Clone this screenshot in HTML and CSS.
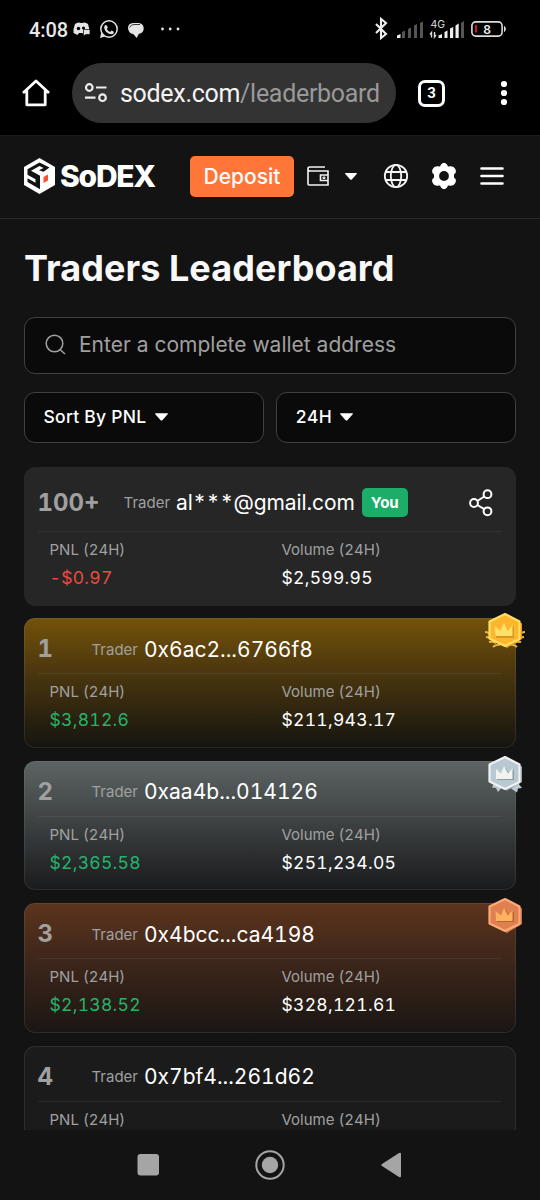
FILE: index.html
```html
<!DOCTYPE html>
<html lang="en">
<head>
<meta charset="utf-8">
<title>Traders Leaderboard</title>
<link rel="stylesheet" href="styles.css">
</head>
<body>
<div class="phone">
  <div class="status">
    <span class="clock">4:08</span>
    <svg class="status-apps" width="110" height="22" viewBox="0 0 110 22" fill="#e4e4e4">
      <path d="M3 5Q6 2.500 9 4h1q3-1.500 6 1l1 4q1 2 0 3h-5v3l-2-1H7l-1.500 2-4-2Q1 10 3 5z"/>
      <circle cx="6.500" cy="9.500" r="1.700" fill="#000"/><circle cx="11.500" cy="9" r="1.500" fill="#000"/>
      <path d="M11.500 10.500H18v5h-4l-2.500 1.500z" stroke="#000" stroke-width=".7"/>
      <circle cx="37" cy="10" r="8.200" fill="none" stroke="#e4e4e4" stroke-width="1.500"/>
      <path d="M29.300 13.500 28 19l5-1.500z"/>
      <path d="M32.800 6.500q1-1.200 2 0l1 2-1 1.500q1.500 2.300 3.300 3l1.500-1.500 2.200 1.200q.5 2-2 2.600Q33.300 15 32.100 8.500z"/>
      <path d="M56 9Q56 4.500 61 4h6q5 1 4.700 6-.3 4-5 5l-2 4-3.500-4Q56.500 14.500 56 9z"/>
      <path d="M57.500 8.500Q59 5.500 62 5.500h6" fill="none" stroke="#222" stroke-width=".9"/>
      <circle cx="90.500" cy="10" r="1.400"/><circle cx="98.200" cy="10" r="1.400"/><circle cx="106" cy="10" r="1.400"/>
    </svg>
    <svg class="status-signals" width="136" height="26" viewBox="0 0 136 26">
      <path d="m3 8 10 10-5 4V3l5 4L3 17" fill="none" stroke="#eee" stroke-width="2.100"/>
      <g fill="#555"><path d="M29 16l3-1.500V22h-3zM35 13l3-1.500V22h-3zM41 9.500 44 8v14h-3zM47 7l3-1.500V22h-3z"/></g>
      <path d="M24 22v-2.500l3.500-1.500v4z" fill="#eee"/>
      <text class="net" x="57.500" y="12">4G</text>
      <path d="M58.500 21.500V16.500l-1.500 2M61.500 16v5l1.500-2" stroke="#ddd" fill="none" stroke-width="1.400"/>
      <path d="M65.500 19.500 69 18v4h-3.500zM71.500 16l3-1.500V22h-3zM77 12.500 80.200 11v11H77zM82.500 9.500l3.200-2V22h-3.200z" fill="#eee"/>
      <path d="M88 7l3-2v17h-3z" fill="#555"/>
      <rect x="98.900" y="5.900" width="30.200" height="14.200" rx="3.800" fill="none" stroke="#ddd" stroke-width="1.600"/>
      <path d="M131.500 10.500q1.800 2.200 0 5z" stroke="#ddd" fill="#ddd"/>
      <rect x="102" y="9" width="2" height="7.500" fill="#d51515"/>
      <text class="batt" x="114" y="17.700" text-anchor="middle">8</text>
    </svg>
  </div>
  <div class="browser">
    <svg class="home" width="28" height="30" viewBox="0 0 28 30" fill="none" stroke="#fff" stroke-width="2.800" stroke-linejoin="round"><path d="M1 15 14 3l13 12M4.800 12.500v14.300h18.400V12.500"/></svg>
    <div class="url">
      <svg width="24" height="20" viewBox="0 0 24 20" fill="none" stroke="#eee" stroke-width="2.200"><circle cx="5.300" cy="4.500" r="3.300"/><path d="M12 4.500h10.500M1 14.700h10.500"/><circle cx="18.500" cy="14.700" r="3.300"/></svg>
      <span class="address">sodex.com<i>/leaderboard</i></span>
    </div>
    <div class="tabs">3</div>
    <svg class="dots" width="8" height="26" viewBox="0 0 8 26" fill="#fff"><circle cx="4" cy="4" r="3.100"/><circle cx="4" cy="13" r="3.100"/><circle cx="4" cy="22" r="3.100"/></svg>
  </div>
  <header class="site">
    <svg class="mark" width="32" height="36" viewBox="0 0 32 36">
      <path d="M16.500 0 32 9v18l-15.500 9L1 27V9z" fill="#fff"/>
      <path d="M26.500 9.500 16.500 4.500 4.500 11.200v5.600l8 4.400v3.500l-8-4.400v3.600l12.500 7.300V17.800l-3-1.700-6-3.400 8.500-4.700 4 2-4.500 2.200 4.500 1.500z" fill="#131313"/>
      <path d="m20.500 19 4.500-2.500v6L20.500 25z" fill="#f4542c"/>
    </svg>
    <span class="brand">SoDEX</span>
    <button class="deposit">Deposit</button>
    <svg class="wallet" width="22" height="20" viewBox="0 0 22 20" fill="none" stroke="#f4f4f4" stroke-width="1.600"><path d="M18 1H3Q1 1 1 2.500V18Q1 19 2 19h19V5H3Q1 5 1 3M21 9h-7.500v5.500H21"/><path d="M16 11h2v1.500h-2z" stroke-width="1"/></svg>
    <svg class="caret" width="12" height="7" viewBox="0 0 12 7" fill="#fff"><path d="M.5 0h11q.8.300.2 1L7 6.300Q6 7.300 5 6.300L.3 1Q-.3.300.5 0z"/></svg>
    <svg class="globe" width="26" height="26" viewBox="0 0 26 26" fill="none" stroke="#f4f4f4" stroke-width="1.800"><circle cx="13" cy="13" r="11.200"/><ellipse cx="13" cy="13" rx="5.200" ry="11.200"/><path d="M2.500 9h21M2.500 17h21"/></svg>
    <svg class="gear" width="26" height="28" viewBox="0 0 26 28"><path d="M10 2.500Q13-.8 16 2.500l1 2 2.500-.2Q23 4 24.300 7l.7 2.300q0 1.700-2 3.200v3q2 1.500 2 3.200L24.300 21q-1.300 3-4.800 2.700l-2.500-.2-1 2q-3 3.300-6 0l-1-2-2.500.2Q3 24 1.700 21L1 18.700q0-1.700 2-3.200v-3Q1 11 1 9.300L1.700 7Q3 4 6.500 4.300L9 4.500z" fill="#fff"/><circle cx="13" cy="14" r="4.900" fill="#131313"/></svg>
    <svg class="burger" width="24" height="20" viewBox="0 0 24 20" stroke="#fff" stroke-width="2.600" stroke-linecap="round"><path d="M1.500 2.500h21M1.500 10h21M1.500 17.500h21"/></svg>
  </header>
  <main>
    <h1>Traders Leaderboard</h1>
    <div class="search">
      <svg width="22" height="22" viewBox="0 0 22 22" fill="none" stroke="#a0a0a0" stroke-width="1.500"><circle cx="10.500" cy="9.500" r="8.300"/><path d="m16 15.500 5 4.500"/></svg>
      <span>Enter a complete wallet address</span>
    </div>
    <div class="filters">
      <div class="select">Sort By PNL <svg width="13" height="8" viewBox="0 0 12 7" fill="#fff"><path d="M.5 0h11q.8.300.2 1L7 6.300Q6 7.300 5 6.300L.3 1Q-.3.300.5 0z"/></svg></div>
      <div class="select">24H <svg width="13" height="8" viewBox="0 0 12 7" fill="#fff"><path d="M.5 0h11q.8.300.2 1L7 6.300Q6 7.300 5 6.300L.3 1Q-.3.300.5 0z"/></svg></div>
    </div>
    <section class="card you">
      <div class="who"><b class="rank">100+</b><span class="role">Trader</span><span class="name mail">al<span class="stars">***</span>@gmail.com</span><span class="tag">You</span>
        <svg class="share" width="24" height="28" viewBox="0 0 24 28" fill="none" stroke="#fff" stroke-width="2"><circle cx="5" cy="14" r="3.900"/><circle cx="18.500" cy="5.200" r="3.900"/><circle cx="18.500" cy="22.300" r="3.900"/><path d="m8.300 12 7-4.500M8.300 16l7 4.200"/></svg>
      </div>
      <div class="stats"><div><span>PNL (24H)</span><em class="loss">-$0.97</em></div><div><span>Volume (24H)</span><em>$2,599.95</em></div></div>
    </section>
    <section class="card gold">
      <div class="who"><b class="rank">1</b><span class="role">Trader</span><span class="name">0x6ac2...6766f8</span></div>
      <div class="stats"><div><span>PNL (24H)</span><em class="gain">$3,812.6</em></div><div><span>Volume (24H)</span><em>$211,943.17</em></div></div>
      <svg class="medal" width="42" height="38" viewBox="0 0 42 38">
        <path d="M1 20q4 0 6 4M2 25q4 0 7 3M5 30q4-1 7 1M9 35q3-3 7-2M41 20q-4 0-6 4M40 25q-4 0-7 3M37 30q-4-1-7 1M33 35q-3-3-7-2" fill="none" stroke="#eab443" stroke-width="2.200"/>
        <path d="m23 4 15 7.500V27L22 36.500z" fill="#eb951c"/>
        <path d="M21 2 35.500 9.500v17.500L21 34 5.500 26.500V9.500z" fill="#ffb62f" stroke="#ffde60" stroke-width="2.200" stroke-linejoin="round"/>
        <path d="m11 15 6 4 4-6.500 4 6.500 5-5v12H12z" fill="#d69724"/><path d="m10.500 14 6 4.500L20 11l4 7.500 4.500-5V24H11.500z" fill="#ffe069"/>
      </svg>
    </section>
    <section class="card silver">
      <div class="who"><b class="rank">2</b><span class="role">Trader</span><span class="name">0xaa4b...014126</span></div>
      <div class="stats"><div><span>PNL (24H)</span><em class="gain">$2,365.58</em></div><div><span>Volume (24H)</span><em>$251,234.05</em></div></div>
      <svg class="medal" width="42" height="38" viewBox="0 0 42 38">
        <path d="m10 28-2 4.500 4 .5 2 4 5-6M34 28l4 5-4 .5-1 4-6-4z" fill="#bacbd3"/>
        <path d="m23 4 15 7.500V27L22 36z" fill="#9aa6ab"/>
        <path d="M21 2 35.500 9.500v17.500L21 34 5.500 26.500V9.500z" fill="#b8c9d1" stroke="#f0f2f2" stroke-width="2.200" stroke-linejoin="round"/>
        <path d="m12.500 15 5 4 4-6.500 4 6.500 4.500-5v11H13z" fill="#8d9da5"/><path d="m12 14 5 4.500L20 11l4 7.500 4.500-5V24H12z" fill="#f2f2ee"/>
      </svg>
    </section>
    <section class="card bronze">
      <div class="who"><b class="rank">3</b><span class="role">Trader</span><span class="name">0x4bcc...ca4198</span></div>
      <div class="stats"><div><span>PNL (24H)</span><em class="gain">$2,138.52</em></div><div><span>Volume (24H)</span><em>$328,121.61</em></div></div>
      <svg class="medal" width="42" height="38" viewBox="0 0 42 38">
        <path d="m23 4 15 7.500V27L22 36.500z" fill="#c3764e"/>
        <path d="M21 2 35.500 9.500v17.500L21 34 5.500 26.500V9.500z" fill="#df8052" stroke="#ffaa76" stroke-width="2.200" stroke-linejoin="round"/>
        <path d="m12.500 15 5 4 4-6.500 4 6.500 4.500-5v11H13z" fill="#b56430"/><path d="m11.500 14 5.500 4.500L20 11l4 7.500 4.500-5V24H12z" fill="#ffb360"/>
      </svg>
    </section>
    <section class="card plain">
      <div class="who"><b class="rank">4</b><span class="role">Trader</span><span class="name">0x7bf4...261d62</span></div>
      <div class="stats"><div><span>PNL (24H)</span></div><div><span>Volume (24H)</span></div></div>
    </section>
  </main>
  <nav class="nav">
    <svg width="22" height="22" viewBox="0 0 22 22" fill="#a5a5a5"><rect x=".5" width="21.500" height="21.500" rx="3"/></svg>
    <svg width="30" height="30" viewBox="0 0 30 30"><circle cx="15" cy="15" r="13.700" fill="none" stroke="#a5a5a5" stroke-width="2"/><circle cx="15" cy="15" r="8.200" fill="#a5a5a5"/></svg>
    <svg width="22" height="26" viewBox="0 0 22 26" fill="#a5a5a5"><path d="M18 1q2-1 2 1v22q0 2-2 1L1 14Q-.5 13 1 12z"/></svg>
  </nav>
</div>
</body>
</html>
```
FILE: styles.css
```css
* { box-sizing: border-box; }
body { margin: 0; background: #131313; font-family: Inter, "Liberation Sans", sans-serif; color: #fff; }
.phone { width: 540px; height: 1200px; overflow: hidden; display: flex; flex-direction: column; }
svg { flex: none; display: block; }
.status { height: 58px; background: #000; display: flex; align-items: flex-start; padding: 17px 31px 0 29px; flex: none; }
.clock { font: 500 20px/26px Roboto, sans-serif; width: 43px; color: #e8e8e8; letter-spacing: -.1px; }
.status-apps { margin-top: 2px; }
.status-signals { margin-left: auto; margin-top: -1px; }
.net { font: 10.5px Inter, sans-serif; fill: #ddd; }
.batt { font: 600 12px Inter, sans-serif; fill: #eee; }
.browser { height: 78px; background: #000; border-bottom: 1px solid #1c1c1c; display: flex; align-items: center; padding: 0 32px 7px 22px; flex: none; }
.url { width: 324px; height: 60px; border-radius: 30px; background: #333; margin-left: 22px; padding-left: 12px; display: flex; align-items: center; gap: 12px; overflow: hidden; white-space: nowrap; }
.address { font: 25px/32px Roboto, sans-serif; color: #f4f4f4; letter-spacing: -.3px; padding-top: 1px; }
.address i { font-style: normal; color: #999; }
.tabs { width: 27px; height: 27px; border: 3px solid #fff; border-radius: 7px; margin-left: 22px; font: 700 15px/21px Roboto, sans-serif; text-align: center; }
.dots { margin-left: auto; }
.site { height: 83px; border-bottom: 1px solid #292929; display: flex; align-items: center; padding: 0 0 2px 23px; flex: none; }
.brand { font-size: 30px; font-weight: 800; letter-spacing: -1.250px; margin-left: 5px; width: 130px; }
.deposit { border: 0; border-radius: 5px; background: #ff7638; color: #fff; width: 104px; height: 41px; padding: 0; font: 500 21px Inter, sans-serif; flex: none; }
.wallet { margin-left: 13px; }
.caret { margin-left: 16px; }
.globe { margin-left: 26px; }
.gear { margin-left: 22px; }
.burger { margin-left: 23px; }
main { padding: 0 24px; height: 911px; overflow: hidden; flex: none; }
h1 { margin: 26px 0 25.500px; font-size: 36px; line-height: 46px; font-weight: 700; letter-spacing: .05px; white-space: nowrap; color: #f8f8f8; }
.search { height: 57px; border: 1.500px solid #404040; border-radius: 11px; background: #0a0a0a; display: flex; align-items: center; gap: 13px; padding: 0 0 1px 19px; font-size: 21px; color: #a0a0a0; white-space: nowrap; }
.filters { display: flex; gap: 12px; margin: 18px 0 24px; }
.select { flex: 1; height: 51px; border: 1.500px solid #404040; border-radius: 11px; background: #0a0a0a; display: flex; align-items: center; gap: 8.500px; padding: 0 0 1px 18.500px; font-size: 17.500px; font-weight: 500; letter-spacing: .25px; white-space: nowrap; font-feature-settings: "tnum"; }
.card { position: relative; height: 129.500px; margin-bottom: 13px; border: 1px solid rgba(150,150,150,.16); border-radius: 11px; padding: 0 13px 0 12.500px; font-feature-settings: "tnum"; background-origin: border-box; }
.you { height: 139px; margin-bottom: 12.500px; background: #262626; border-color: #262626; }
.gold { background-image: linear-gradient(#735209, #45330f 48%, #151410); }
.silver { background-image: linear-gradient(#5c6463, #3d4142 48%, #191a1c); }
.bronze { background-image: linear-gradient(#5c341d, #3b251a 48%, #1a1613); }
.plain { background: #1b1b1b; }
.who { height: 55px; display: flex; align-items: center; padding-top: 6px; border-bottom: 1px solid rgba(255,255,255,.06); white-space: nowrap; }
.you .who { height: 64px; padding-top: 7px; }
.rank { min-width: 30px; margin-right: 24px; font-size: 24px; line-height: 30px; color: #a0a0a0; }
.role { font-size: 15px; color: #a0a0a0; margin-right: 6px; }
.name { font-size: 21px; }
.mail { letter-spacing: -.1px; }
.stars { letter-spacing: 0; }
.tag { background: #1bae68; border-radius: 5px; width: 46px; height: 29px; line-height: 29px; text-align: center; font-size: 15px; font-weight: 700; margin-left: 7px; }
.share { margin-left: auto; margin-right: 9px; }
.stats { display: grid; grid-template-columns: 232px 1fr; padding: 8px 12px 0; }
.stats span { display: block; font-size: 15px; line-height: 20px; color: #a0a0a0; letter-spacing: 0; }
.stats em { display: block; font-style: normal; font-size: 17.500px; line-height: 24px; margin-top: 6px; letter-spacing: .3px; }
.stats .gain { color: #24b36b; }
.stats .loss { color: #ee4a3f; }
.medal { position: absolute; right: -11px; top: -7px; }
.nav { flex: 1; background: #131313; display: flex; align-items: center; justify-content: center; gap: 96px; }
```
